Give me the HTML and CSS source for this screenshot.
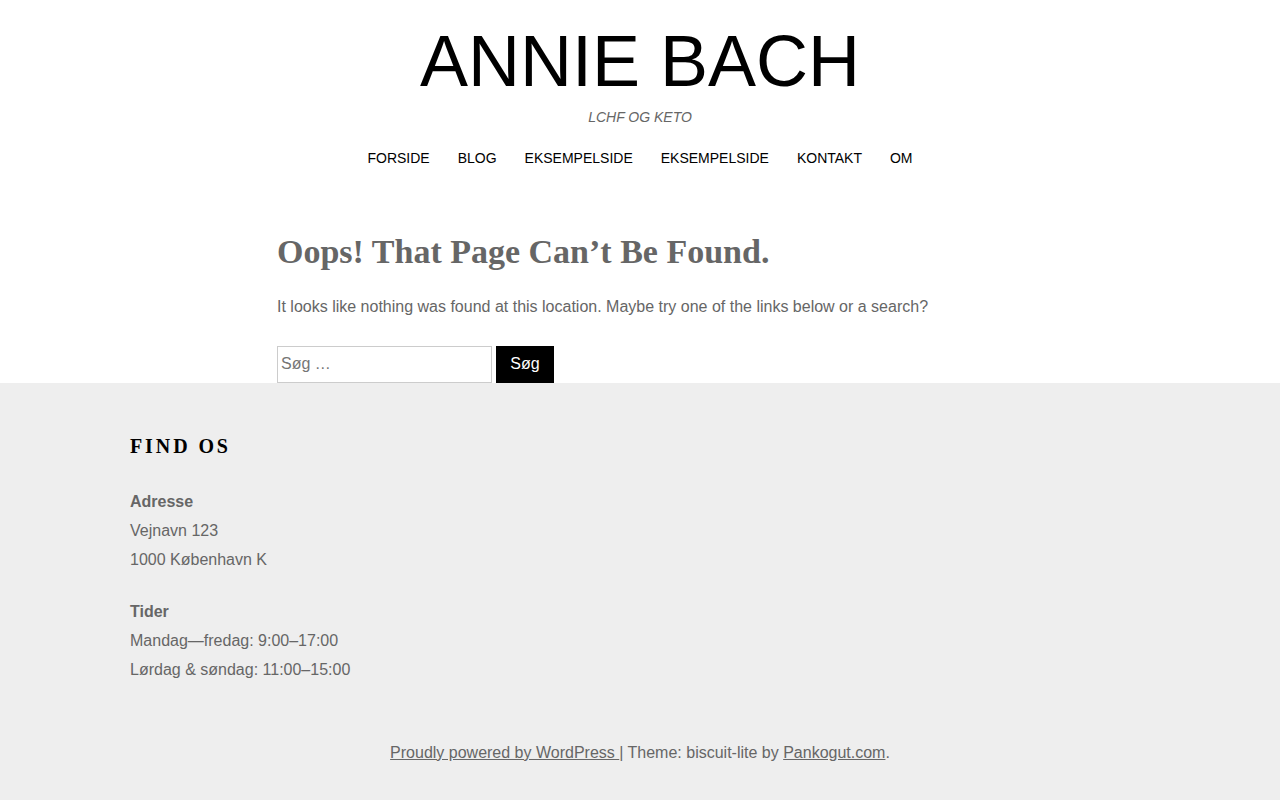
FILE: index.html
```
<!DOCTYPE html>
<html lang="da"><head><meta charset="utf-8"><title>Annie Bach</title><link rel="stylesheet" href="styles.css"></head><body>
<header class="site-header">
  <h1 class="site-title"><a href="#">ANNIE BACH</a></h1>
  <p class="site-description">LCHF OG KETO</p>
  <nav class="main-nav">
    <ul>
      <li><a href="#">FORSIDE</a></li>
      <li><a href="#">BLOG</a></li>
      <li><a href="#">EKSEMPELSIDE</a></li>
      <li><a href="#">EKSEMPELSIDE</a></li>
      <li><a href="#">KONTAKT</a></li>
      <li><a href="#">OM</a></li>
    </ul>
  </nav>
</header>
<main class="content">
  <h2 class="page-title">Oops! That Page Can’t Be Found.</h2>
  <p class="lead">It looks like nothing was found at this location. Maybe try one of the links below or a search?</p>
  <form class="search-form">
    <input class="search-field" type="search" placeholder="Søg …">
    <button class="search-submit" type="button">Søg</button>
  </form>
</main>
<footer class="site-footer">
  <div class="widget">
    <h3 class="widget-title">FIND OS</h3>
    <p><strong>Adresse</strong><br>Vejnavn 123<br>1000 København K</p>
    <p><strong>Tider</strong><br>Mandag—fredag: 9:00–17:00<br>Lørdag &amp; søndag: 11:00–15:00</p>
  </div>
  <div class="site-info">
    <a href="#">Proudly powered by WordPress </a>| Theme: biscuit-lite by <a href="#">Pankogut.com</a>.
  </div>
</footer>
</body></html>
```
FILE: styles.css
```
html,body{margin:0;padding:0}
body{font-family:"Liberation Sans",Arial,sans-serif;font-size:16px;color:#666;background:#fff}
.site-header{text-align:center;padding-top:18px}
.site-title{margin:0;font-size:72px;font-weight:normal;line-height:86px}
.site-title a{color:#000;text-decoration:none}
.site-description{margin:3px 0 0;font-size:14px;font-style:italic;line-height:20px;color:#666}
.main-nav ul{list-style:none;margin:23px 0 0;padding:0;display:flex;justify-content:center}
.main-nav li a{display:block;padding:0 14px;font-size:14px;line-height:16px;color:#000;text-decoration:none}
.content{width:726px;margin:0 auto;padding-top:66px}
.page-title{margin:0;font-family:"Liberation Serif","Times New Roman",serif;font-size:34px;font-weight:bold;line-height:40px;color:#666}
.lead{margin:23px 0 0;line-height:24px}
.search-form{display:flex;gap:4px;margin-top:27px}
.search-field{box-sizing:border-box;width:215px;height:37px;margin:0;padding:0 3px 1px;border:1px solid #ccc;font-family:"Liberation Sans",Arial,sans-serif;font-size:16px;color:#666;background:#fff;outline:none}
.search-field::placeholder{color:#757575}
.search-submit{box-sizing:border-box;width:58px;height:37px;margin:0;padding:0 0 1px;border:0;background:#000;color:#fff;font-family:"Liberation Sans",Arial,sans-serif;font-size:16px}
.site-footer{background:#eee;padding:50px 0 36px}
.widget{width:1020px;margin:0 auto}
.widget-title{margin:0;font-family:"Liberation Serif","Times New Roman",serif;font-size:20px;font-weight:bold;letter-spacing:2.9px;line-height:26px;color:#000}
.widget p{margin:28px 0 0;line-height:29px}
.widget p + p{margin-top:23px}
.widget strong{font-weight:bold}
.site-info{text-align:center;margin-top:57px;line-height:24px}
.site-info a{color:#666;text-decoration:underline}
```
